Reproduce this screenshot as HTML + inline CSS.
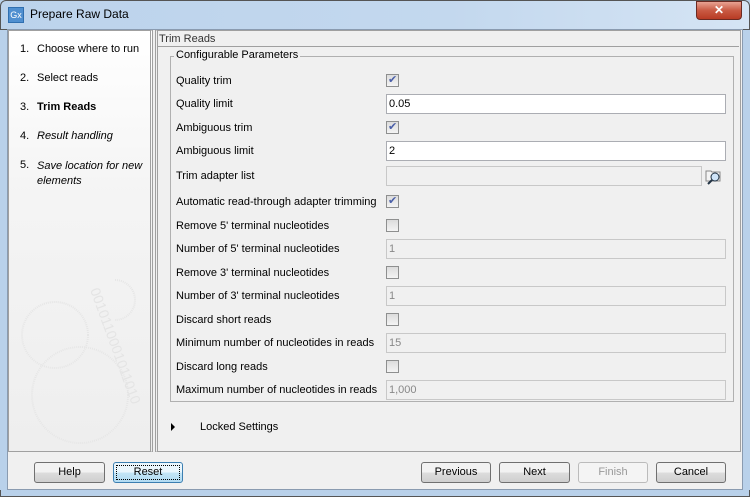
<!DOCTYPE html>
<html><head><style>
*{margin:0;padding:0;box-sizing:border-box}
body{width:750px;height:497px;overflow:hidden;background:#b9d1ea;font-family:"Liberation Sans",Tahoma,sans-serif;font-size:11px;color:#000;position:relative}
.abs{position:absolute}
#title{left:0;top:0;width:750px;height:30px;background:linear-gradient(90deg,#bcd3ec,#c3d8ee 60%,#d5e4f4);border-radius:6px 6px 0 0;border:1px solid #555}
#client{left:7px;top:29px;width:736px;height:461px;background:#f0f0f0;border:1px solid #8a9bb0}
.lbl{position:absolute;left:176px;font-size:11px}
.cb{position:absolute;left:386px;width:13px;height:13px;border:1px solid #8e8f8f;background:linear-gradient(#dcdcdc,#f4f4f4)}
.cb.on::after{content:"✔";position:absolute;left:1px;top:-2px;font-size:11px;color:#4a5fa8}
.inp{position:absolute;left:386px;width:340px;height:20px;border:1px solid #abadb3;background:#fff;padding:3px 2px;font-size:11px}
.inp.dis{background:#f0f0f0;color:#888;border-color:#c8c8c8}
.btn{position:absolute;top:462px;height:21px;border:1px solid #707070;border-radius:3px;background:linear-gradient(#f2f2f2 50%,#dddddd 50%,#cfcfcf);text-align:center;line-height:19px;font-size:11px}
.step{position:absolute;left:20px;font-size:11px}
.step span{position:absolute;left:17px;white-space:nowrap}
</style></head><body>
<div id="title" class="abs"></div>
<div class="abs" style="left:8px;top:7px;width:16px;height:16px;background:#4f8fd0;border:1px solid #2f6fb0;color:#fff;font-size:9px;line-height:14px;text-align:center">Gx</div>
<div class="abs" style="left:30px;top:7px;font-size:12px">Prepare Raw Data</div>
<div class="abs" style="left:696px;top:1px;width:46px;height:19px;border:1px solid #6b2a22;border-radius:0 0 4px 4px;background:linear-gradient(#e8a393,#c95a43 50%,#b83b24);color:#fff;text-align:center;font-weight:bold;font-size:12px;line-height:17px">✕</div>
<div id="client" class="abs"></div>
<div class="abs" style="left:8px;top:30px;width:145px;height:422px;background:linear-gradient(#fff,#f4f4f4 40%,#eeeeee);border:1px solid #a0a0a0;border-right:3px double #a0a0a0"></div>
<svg class="abs" style="left:10px;top:260px" width="140" height="190"><g fill="none" stroke="#e6e6e6" stroke-width="2" stroke-dasharray="1 1"><circle cx="45" cy="75" r="33"/><circle cx="70" cy="135" r="48"/><path d="M105 20 a20 20 0 1 1 0 40"/></g><text x="80" y="30" fill="#e4e4e4" font-size="14" transform="rotate(70 80 30)">0010110001011010</text></svg>
<div class="step" style="top:43px">1.<span>Choose where to run</span></div>
<div class="step" style="top:72px">2.<span>Select reads</span></div>
<div class="step" style="top:101px">3.<span style="font-weight:bold">Trim Reads</span></div>
<div class="step" style="top:130px">4.<span style="font-style:italic">Result handling</span></div>
<div class="step" style="top:159px">5.<span style="font-style:italic;line-height:15px">Save location for new<br>elements</span></div>
<div class="abs" style="left:155px;top:30px;width:586px;height:422px;border:1px solid #a0a0a0;border-left:3px double #a0a0a0"></div>
<div class="abs" style="left:159px;top:33px;color:#333">Trim Reads</div>
<div class="abs" style="left:157px;top:46px;width:582px;height:404px;border-top:1px solid #a0a0a0"></div>
<div class="abs" style="left:170px;top:56px;width:564px;height:346px;border:1px solid #b0b0b0"></div>
<div class="abs" style="left:174px;top:49px;background:#f0f0f0;padding:0 2px">Configurable Parameters</div>
<div class="lbl" style="top:75px">Quality trim</div><div class="cb on" style="top:74px"></div>
<div class="lbl" style="top:98px">Quality limit</div><div class="inp" style="top:94px">0.05</div>
<div class="lbl" style="top:122px">Ambiguous trim</div><div class="cb on" style="top:121px"></div>
<div class="lbl" style="top:145px">Ambiguous limit</div><div class="inp" style="top:141px">2</div>
<div class="lbl" style="top:170px">Trim adapter list</div><div class="inp dis" style="top:166px;width:316px"></div>
<svg class="abs" style="left:704px;top:167px" width="18" height="18"><path d="M2 4h5l1 1h8v9H2z" fill="#f4f4f4" stroke="#888"/><circle cx="11" cy="10" r="4" fill="#cfe4f8" stroke="#234"/><path d="M8 13l-4 4" stroke="#234" stroke-width="2"/></svg>
<div class="lbl" style="top:196px">Automatic read-through adapter trimming</div><div class="cb on" style="top:195px"></div>
<div class="lbl" style="top:220px">Remove 5' terminal nucleotides</div><div class="cb" style="top:219px"></div>
<div class="lbl" style="top:243px">Number of 5' terminal nucleotides</div><div class="inp dis" style="top:239px">1</div>
<div class="lbl" style="top:267px">Remove 3' terminal nucleotides</div><div class="cb" style="top:266px"></div>
<div class="lbl" style="top:290px">Number of 3' terminal nucleotides</div><div class="inp dis" style="top:286px">1</div>
<div class="lbl" style="top:314px">Discard short reads</div><div class="cb" style="top:313px"></div>
<div class="lbl" style="top:337px">Minimum number of nucleotides in reads</div><div class="inp dis" style="top:333px">15</div>
<div class="lbl" style="top:361px">Discard long reads</div><div class="cb" style="top:360px"></div>
<div class="lbl" style="top:384px">Maximum number of nucleotides in reads</div><div class="inp dis" style="top:380px">1,000</div>
<div class="abs" style="left:171px;top:423px;width:0;height:0;border-left:4px solid #000;border-top:4px solid transparent;border-bottom:4px solid transparent"></div>
<div class="abs" style="left:200px;top:421px">Locked Settings</div>
<div class="btn" style="left:34px;width:71px">Help</div>
<div class="btn" style="left:113px;width:70px;border-color:#3c7fb1;background:linear-gradient(#eaf6fd 50%,#c4e5f6 50%,#b2dcf3)"><div style="margin:2px;border:1px dotted #000;line-height:13px">Reset</div></div>
<div class="btn" style="left:421px;width:70px">Previous</div>
<div class="btn" style="left:499px;width:71px">Next</div>
<div class="btn" style="left:578px;width:70px;color:#999;border-color:#bbb;background:#f4f4f4">Finish</div>
<div class="btn" style="left:656px;width:70px">Cancel</div>
<div class="abs" style="left:0;top:490px;width:750px;height:7px;background:#b9d1ea;border:1px solid #555;border-top:none"></div>
</body></html>
